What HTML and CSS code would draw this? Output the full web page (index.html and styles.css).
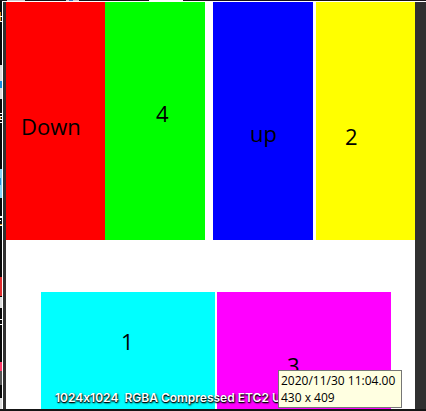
FILE: index.html
```html
<!DOCTYPE html>
<html lang="en">
<head>
<meta charset="utf-8">
<title>Texture preview</title>
<link rel="stylesheet" href="styles.css">
</head>
<body>
<div class="window">
  <svg class="edge-top" viewBox="0 0 426 1" preserveAspectRatio="none" shape-rendering="crispEdges" aria-hidden="true">
    <path fill="#cfcbd0" d="M7 0h18v1H7zM66 0h13v1H66z"/>
    <path fill="#3770b5" d="M69 0h4v1h-4z"/>
    <path fill="#fff" d="M149 0h34v1h-34z"/>
  </svg>
  <div class="middle">
    <svg class="edge-left" viewBox="0 0 2 408" preserveAspectRatio="none" shape-rendering="crispEdges" aria-hidden="true">
      <path fill="#d78a22" d="M0 11h1v9H0zM0 116h1v3H0zM0 223h2v1H0z"/>
      <path fill="#fff" d="M0 15h2v1H0zM0 20h2v1H0zM0 112h2v1H0zM0 115h2v1H0zM0 118h2v1H0zM0 121h2v1H0zM0 215h2v2H0zM0 219h1v1H0zM0 224h2v1H0zM0 318h2v1H0zM0 323h2v1H0z"/>
      <path fill="#ddd" d="M0 64h2v34H0zM0 296h2v11H0zM0 397h2v11H0z"/>
      <path fill="#168bdd" d="M0 80h2v7H0z"/>
      <path fill="#86d3f6" d="M0 168h2v29H0z"/>
      <path fill="#278fd6" d="M0 177h1v7H0z"/>
      <path fill="#e02b2d" d="M0 276h2v19H0z"/>
      <path fill="#ff3868" d="M0 361h2v9H0z"/>
      <path fill="#555" d="M0 370h2v14H0z"/>
    </svg>
    <main class="viewer">
      <div class="texture">
        <div class="row row-upper">
          <div class="tile red">Down</div>
          <div class="tile green">4</div>
          <div class="tile blue">up</div>
          <div class="tile yellow">2</div>
        </div>
        <div class="row row-lower">
          <div class="tile cyan">1</div>
          <div class="tile magenta">3</div>
        </div>
      </div>
      <p class="caption">1024x1024&nbsp; RGBA Compressed ETC2 U</p>
      <div class="tooltip" role="tooltip">
        <div>2020/11/30 11:04.00</div>
        <div>430 x 409</div>
      </div>
    </main>
  </div>
</div>
</body>
</html>
```
FILE: styles.css
```css
* {
  box-sizing: border-box;
}

body {
  margin: 0;
  background: #151515;
}

.window {
  display: flex;
  flex-direction: column;
  height: 100vh;
  padding-bottom: 2px;
}

.edge-top {
  display: block;
  flex: none;
  width: 100%;
  height: 1px;
  background: #181318;
}

.middle {
  display: flex;
  flex: 1;
  min-height: 0;
}

.edge-left {
  display: block;
  flex: none;
  width: 2px;
  height: 100%;
  background: #090909;
}

.viewer {
  position: relative;
  display: flex;
  flex: 1;
  min-width: 0;
  padding: 0 11px 0 3px;
  border-top: 1px solid #fff;
  border-left: 1px solid #fff;
  background: #303030;
}

.texture {
  display: flex;
  flex: 1;
  flex-direction: column;
  gap: 52px;
  min-width: 0;
  overflow: hidden;
  background: #fff;
}

.row {
  display: grid;
}

.row-upper {
  grid-template-columns: 99fr 108fr 103fr 99fr;
  height: 238px;
}

.row-lower {
  flex: 1;
  grid-template-columns: 1fr 1fr;
  gap: 2px;
  min-height: 0;
  padding: 0 24px 0 35px;
}

.tile {
  min-width: 0;
  color: #000;
  font: 22px/30px "Open Sans", "Noto Sans", sans-serif;
}

.red {
  padding: 109px 0 0 15px;
  background: #f00;
}

.green {
  padding: 96px 0 0 51px;
  margin-right: 8px;
  background: #0f0;
}

.blue {
  padding: 116px 0 0 37px;
  margin-right: 3px;
  background: #00f;
}

.yellow {
  padding: 119px 0 0 29px;
  background: #ff0;
}

.cyan {
  padding: 34px 0 0 80px;
  background: #0ff;
}

.magenta {
  padding: 58px 0 0 70px;
  background: #f0f;
}

.caption {
  position: absolute;
  bottom: 3px;
  left: 52px;
  margin: 0;
  color: #fff;
  font: 600 12px/16px Inter, sans-serif;
  font-feature-settings: "calt" 0;
  white-space: nowrap;
  text-shadow: 0 1px 1px #000, 1px 1px 2px #000;
}

.tooltip {
  position: absolute;
  right: 24px;
  bottom: 1px;
  min-width: 124px;
  padding: 1px 2px;
  border: 1px solid #767676;
  background: #ffffe1;
  color: #000;
  font: 12px/17px "Open Sans", "Noto Sans", sans-serif;
  white-space: nowrap;
}
```
